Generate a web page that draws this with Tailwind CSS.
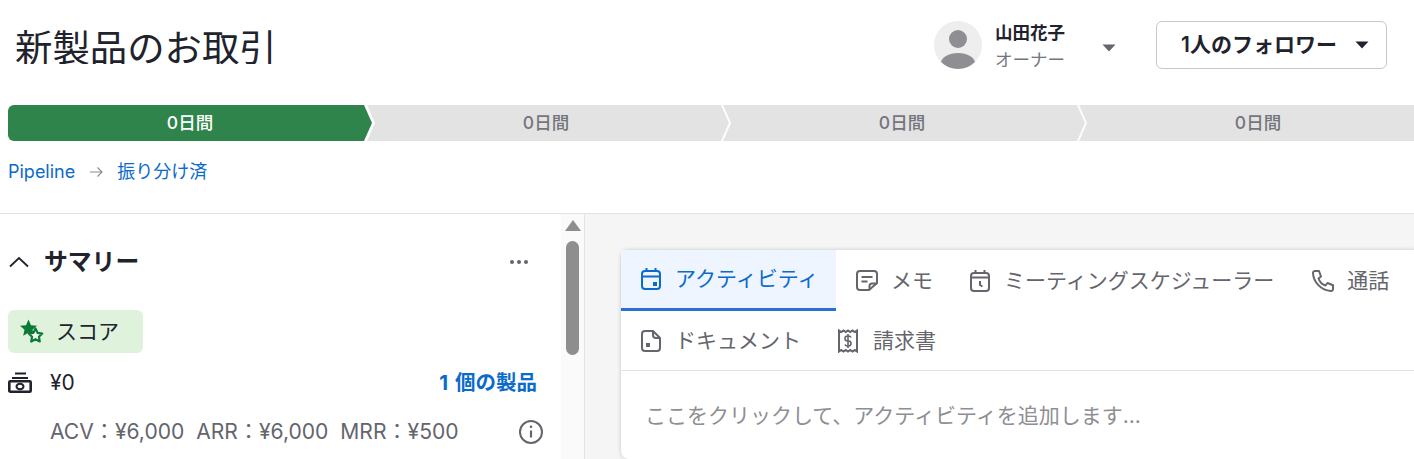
<!DOCTYPE html>
<html lang="ja">
<head>
  <meta charset="UTF-8" />
  <title>新製品のお取引</title>
  <script src="https://cdn.jsdelivr.net/npm/@tailwindcss/browser@4"></script>
</head>
<body class="h-[459px] w-[1414px] overflow-hidden bg-white font-['Inter','Noto_Sans_CJK_JP',sans-serif] text-[#21232c]">
  <!-- Header -->
  <div class="flex h-[105px] items-start">
    <h1 class="ml-[15px] mt-[24px] h-[40px] flex-1 overflow-hidden text-[37.4px] leading-[50px] font-normal">新製品のお取引</h1>
    <div class="mt-[21px] flex items-center">
      <div class="flex h-[48px] w-[48px] items-center justify-center overflow-hidden rounded-full bg-[#eeeeee]">
        <svg width="48" height="48" viewBox="0 0 48 48" fill="#8e8e93"><circle cx="24" cy="18" r="9"/><ellipse cx="24" cy="42" rx="17" ry="10"/></svg>
      </div>
      <div class="ml-[13px] h-[48px] w-[71px]">
        <div class="-mt-[2px] text-[17.5px] leading-[27px] font-semibold">山田花子</div>
        <div class="text-[17.5px] leading-[27px] text-[#74757d]">オーナー</div>
      </div>
      <svg class="ml-[36px] mr-[40px] mt-[6px]" width="14" height="8" viewBox="0 0 14 8" fill="#64656d"><path d="M0.5 0.5h13L7 7.5z"/></svg>
      <button class="mr-[27px] flex h-[48px] w-[231px] items-center rounded-[6px] border border-[#c8c8c8] pl-[24px] text-[21px] font-semibold">
        1人のフォロワー
        <svg class="ml-[18px]" width="14" height="8" viewBox="0 0 14 8" fill="#21232c"><path d="M0.5 0.5h13L7 7.5z"/></svg>
      </button>
    </div>
  </div>

  <!-- Stage bar -->
  <div class="ml-2 flex h-[36px] overflow-hidden text-[17.5px] font-medium">
    <div class="flex w-[364px] shrink-0 items-center justify-center rounded-l-[6px] bg-[#2e844a] text-white [clip-path:polygon(0_0,356px_0,364px_50%,356px_100%,0_100%)]">0日間</div>
    <div class="-ml-[5px] flex w-[362px] shrink-0 items-center justify-center bg-[#e3e3e3] pr-[4px] text-[#74757d] [clip-path:polygon(0_0,354px_0,362px_50%,354px_100%,0_100%,8px_50%)]">0日間</div>
    <div class="-ml-[6px] flex w-[362px] shrink-0 items-center justify-center bg-[#e3e3e3] pr-[4px] text-[#74757d] [clip-path:polygon(0_0,354px_0,362px_50%,354px_100%,0_100%,8px_50%)]">0日間</div>
    <div class="-ml-[6px] flex w-[362px] shrink-0 items-center justify-center bg-[#e3e3e3] pr-[4px] text-[#74757d] [clip-path:polygon(0_0,354px_0,362px_50%,354px_100%,0_100%,8px_50%)]">0日間</div>
  </div>

  <!-- Breadcrumb -->
  <div class="ml-2 flex h-[72px] items-start pt-[18px] text-[18px] leading-[26px] text-[#0b6bcb]">
    <span>Pipeline</span>
    <svg class="ml-[14px] mr-[14px] mt-[7px]" width="14" height="12" viewBox="0 0 14 12" fill="none" stroke="#8e8e93" stroke-width="1.2"><path d="M1 6h12M8.5 1.500 13 6l-4.500 4.500"/></svg>
    <span>振り分け済</span>
  </div>

  <div class="flex h-[246px] border-t border-[#e3e3e3]">
    <!-- Summary panel -->
    <div class="w-[561px] shrink-0 pl-2 pr-[17px]">
      <div class="flex h-[71px] items-center pt-[24px]">
        <svg width="22" height="12" viewBox="0 0 22 12" fill="none" stroke="#21232c" stroke-width="1.800"><path d="M2 10.500 11 2l9 8.500"/></svg>
        <h2 class="ml-[14px] flex-1 text-[23.8px] font-bold">サマリー</h2>
        <div class="mr-[16px] mt-[1px] flex gap-[3px]">
          <span class="h-[4px] w-[4px] rounded-full bg-[#64656d]"></span>
          <span class="h-[4px] w-[4px] rounded-full bg-[#64656d]"></span>
          <span class="h-[4px] w-[4px] rounded-full bg-[#64656d]"></span>
        </div>
      </div>
      <div class="mt-[25px] flex h-[43px] w-[135px] items-center rounded-[6px] bg-[#dff3dc] pl-[12px] text-[21px]">
        <svg width="24" height="26" viewBox="0 0 24 26"><path d="M8.500 0.500l2.500 5.700 6 .6-4.500 4 1.300 6-5.300-3.100-5.300 3.100 1.300-6L0 6.800l6-.6z" fill="#0a7a36"/><path d="M15.500 9.500l2.100 4.400 4.700.6-3.400 3.300.9 4.700-4.300-2.300-4.300 2.300.9-4.700-3.400-3.300 4.700-.6z" fill="#f1faef" stroke="#0a7a36" stroke-width="2.200" stroke-linejoin="round"/></svg>
        <span class="ml-[12px]">スコア</span>
      </div>
      <div class="mt-[12px] flex h-[36px] items-center">
        <svg width="24" height="22" viewBox="0 0 24 22" fill="none"><path d="M7 1.500h11M4 6h16" stroke="#21232c" stroke-width="2"/><rect x="1.300" y="9.300" width="21.400" height="10.400" rx="1" fill="#fff" stroke="#21232c" stroke-width="2.600"/><ellipse cx="12" cy="14.500" rx="3.500" ry="2.800" stroke="#21232c" stroke-width="2"/></svg>
        <span class="ml-[18px] flex-1 text-[21px]">¥0</span>
        <span class="text-[20.5px] font-bold text-[#0b6bcb] [word-spacing:2px]">1 個の製品</span>
        <span class="w-[7px]"></span>
      </div>
      <div class="mt-[13px] flex h-[36px] items-center pl-[42px] text-[#64656d]">
        <span class="flex-1 whitespace-pre text-[21.1px]">ACV：¥6,000  ARR：¥6,000  MRR：¥500</span>
        <svg width="26" height="26" viewBox="0 0 26 26" fill="none" stroke="#64656d"><circle cx="13" cy="13" r="11" stroke-width="2"/><path d="M13 11.500v7" stroke-width="2.200"/><circle cx="13" cy="7.800" r="1.300" fill="#64656d" stroke="none"/></svg>
      </div>
    </div>

    <!-- Scrollbar -->
    <div class="flex w-[24px] shrink-0 flex-col items-center border-r border-[#e3e3e3] bg-[#fafafa] pt-[6px]">
      <div class="h-0 w-0 border-x-[8px] border-b-[11px] border-x-transparent border-b-[#8e8e8e]"></div>
      <div class="mt-[10px] h-[114px] w-[13px] rounded-full bg-[#8e8e8e]"></div>
    </div>

    <!-- Activity panel -->
    <div class="flex-1 overflow-hidden bg-[#f5f5f5] pl-[36px] pt-[36px]">
      <div class="h-[209px] w-[800px] rounded-[8px] bg-white shadow-[0_0_4px_rgba(0,0,0,0.2)]">
        <div class="flex h-[61px] items-stretch text-[21px] text-[#64656d]">
          <div class="flex w-[215px] items-center gap-[13px] border-b-[3px] border-[#2670d6] bg-[#eef5fe] pl-[19px] text-[#0b6bcb]">
            <svg width="22" height="24" viewBox="0 0 22 24" fill="none" stroke="#0b6bcb" stroke-width="2"><rect x="2" y="4" width="18" height="18" rx="3"/><path d="M2 9.500h18M6.500 1v4M15.500 1v4"/><rect x="13" y="15" width="4" height="4" fill="#0b6bcb" stroke="none"/></svg>
            <span>アクティビティ</span>
          </div>
          <div class="flex items-center gap-[13px] pl-[20px]">
            <svg width="22" height="22" viewBox="0 0 22 22" fill="none" stroke="#64656d" stroke-width="2"><path d="M13 20H4a3 3 0 0 1-3-3V4a3 3 0 0 1 3-3h14a3 3 0 0 1 3 3v9z"/><path d="M5.500 7h11M5.500 11.500h6M13.500 20v-4a2.500 2.500 0 0 1 2.500-2.500h5"/></svg>
            <span>メモ</span>
          </div>
          <div class="flex items-center gap-[13px] pl-[36px]">
            <svg width="22" height="24" viewBox="0 0 22 24" fill="none" stroke="#64656d" stroke-width="2"><rect x="2" y="4" width="18" height="18" rx="3"/><path d="M2 8.500h18M6.500 1v4M15.500 1v4M11 12v4l2.500 1.500"/></svg>
            <span>ミーティングスケジューラー</span>
          </div>
          <div class="flex items-center gap-[12px] pl-[38px]">
            <svg width="23" height="23" viewBox="0 0 23 23" fill="none" stroke="#64656d" stroke-width="2" stroke-linejoin="round"><path d="M3 2h4l2 5.500-2.500 2a11 11 0 0 0 7 7l2-2.500 5.500 2.200V20a2 2 0 0 1-2.200 2C9.500 21.500 1.500 13.500 1 4.200A2 2 0 0 1 3 2z"/></svg>
            <span>通話</span>
          </div>
        </div>
        <div class="flex h-[60px] items-center border-b border-[#e3e3e3] text-[21px] text-[#64656d]">
          <svg class="ml-[20px]" width="20" height="22" viewBox="0 0 20 22" fill="none" stroke="#64656d" stroke-width="2" stroke-linejoin="round"><path d="M12 1H4a3 3 0 0 0-3 3v14a3 3 0 0 0 3 3h12a3 3 0 0 0 3-3V8z"/><path d="M12 1v4a3 3 0 0 0 3 3h4"/><rect x="5" y="13" width="4" height="4" fill="#64656d" stroke="none"/></svg>
          <span class="ml-[14px]">ドキュメント</span>
          <svg class="ml-[36px]" width="22" height="24" viewBox="0 0 22 24" fill="none" stroke="#64656d" stroke-width="2"><path d="M2 1.500l2.250 1.500 2.250-1.500 2.250 1.500L11 1.500l2.250 1.500 2.250-1.500 2.250 1.500L20 1.500v21l-2.250-1.500-2.250 1.500-2.250-1.500L11 22.500 8.750 21l-2.250 1.500L4.250 21 2 22.500z"/><path d="M14 8.500a2.500 2 0 0 0-2.500-1.500h-1a2.300 2.300 0 0 0 0 5h1a2.300 2.300 0 0 1 0 5h-1A2.500 2 0 0 1 8 15.500M11 5v14" stroke-width="1.600"/></svg>
          <span class="ml-[14px]">請求書</span>
        </div>
        <div class="pl-[24px] pt-[30px] text-[21px] leading-[30px] text-[#8e8e93]">ここをクリックして、アクティビティを追加します...</div>
      </div>
    </div>
  </div>
</body>
</html>
